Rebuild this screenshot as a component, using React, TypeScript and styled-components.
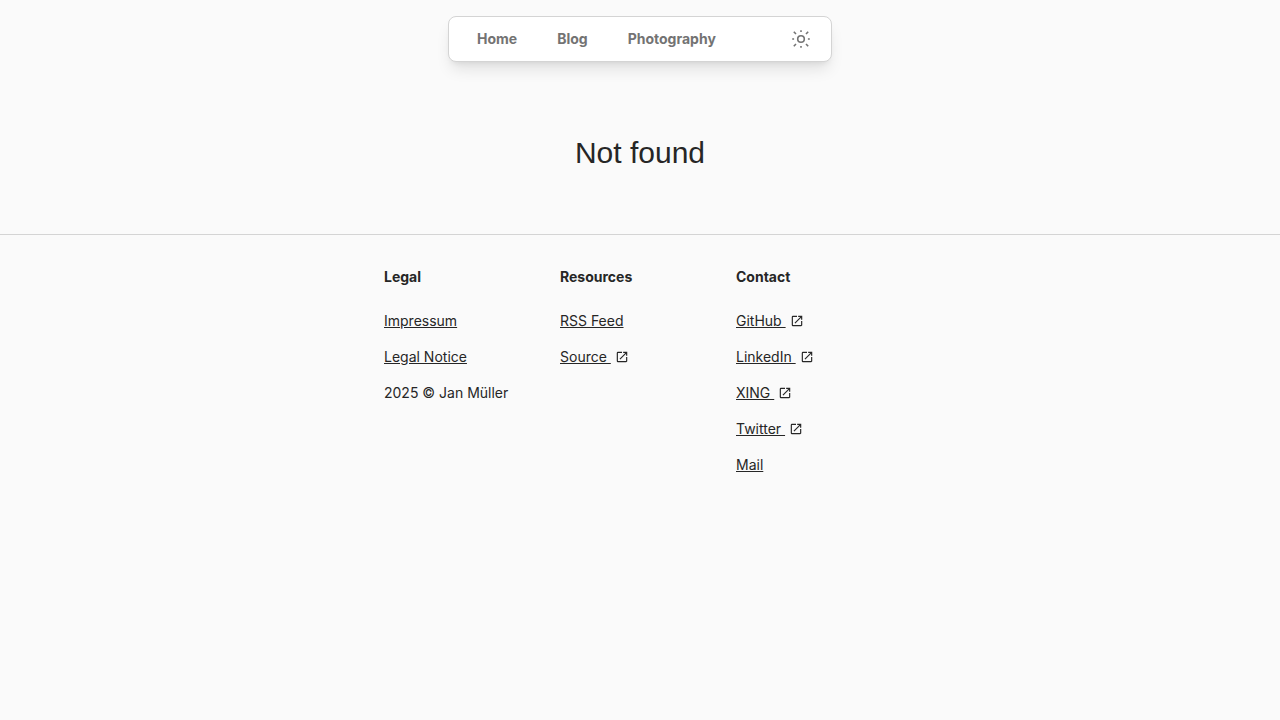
import React from "react";
import styled, { createGlobalStyle } from "styled-components";
import { MdOpenInNew } from "react-icons/md";

const GlobalStyle = createGlobalStyle`
  *, *::before, *::after { box-sizing: border-box; }
  body {
    margin: 0;
    background: #fafafa;
    color: #262626;
    font-family: Inter, "Liberation Sans", sans-serif;
    font-size: 14px;
    line-height: 20px;
    -webkit-font-smoothing: antialiased;
  }
`;

const Header = styled.header`
  display: flex;
  justify-content: center;
  padding: 16px;
`;

const NavBar = styled.nav`
  display: flex;
  align-items: center;
  justify-content: space-between;
  width: 100%;
  max-width: 384px;
  padding: 4px 12px 4px 8px;
  background: #fff;
  border: 1px solid #d4d4d4;
  border-radius: 8px;
  box-shadow: 0 10px 15px -3px rgba(0, 0, 0, 0.1), 0 4px 6px -4px rgba(0, 0, 0, 0.1);
`;

const NavLinks = styled.div`
  display: flex;
`;

const NavLink = styled.a`
  padding: 8px 20px;
  color: #737373;
  font-weight: 700;
  text-decoration: none;
`;

const ThemeButton = styled.button`
  display: flex;
  padding: 8px;
  border: 0;
  background: none;
  color: #737373;
  cursor: pointer;
`;

const Main = styled.main`
  padding: 57px 16px 63px;
`;

const Title = styled.h1`
  margin: 0;
  font-family: "Liberation Sans", Arial, sans-serif;
  font-size: 30px;
  line-height: 36px;
  font-weight: 400;
  text-align: center;
`;

const Footer = styled.footer`
  padding: 32px 16px;
  border-top: 1px solid #d4d4d4;
`;

const Columns = styled.div`
  display: grid;
  grid-template-columns: repeat(3, 1fr);
  gap: 16px;
  max-width: 512px;
  margin: 0 auto;
`;

const ColumnTitle = styled.h2`
  margin: 0 0 24px;
  font-size: 14px;
  line-height: 20px;
  font-weight: 700;
`;

const List = styled.ul`
  display: flex;
  flex-direction: column;
  gap: 16px;
  margin: 0;
  padding: 0;
  list-style: none;
`;

const Item = styled.li`
  white-space: nowrap;
`;

const FooterLink = styled.a`
  display: inline-flex;
  align-items: center;
  gap: 4px;
  color: inherit;
  text-decoration: none;
`;

const Label = styled.span`
  white-space: pre;
  text-decoration: underline;
`;

type Entry = { label: string; href?: string; external?: boolean };

const columns: { title: string; entries: Entry[] }[] = [
  {
    title: "Legal",
    entries: [
      { label: "Impressum", href: "#impressum" },
      { label: "Legal Notice", href: "#legal" },
      { label: "2025 © Jan Müller" },
    ],
  },
  {
    title: "Resources",
    entries: [
      { label: "RSS Feed", href: "#rss" },
      { label: "Source", href: "#source", external: true },
    ],
  },
  {
    title: "Contact",
    entries: [
      { label: "GitHub", href: "#github", external: true },
      { label: "LinkedIn", href: "#linkedin", external: true },
      { label: "XING", href: "#xing", external: true },
      { label: "Twitter", href: "#twitter", external: true },
      { label: "Mail", href: "#mail" },
    ],
  },
];

const SunIcon = () => (
  <svg width="20" height="20" viewBox="0 0 20 20" fill="none" stroke="currentColor" strokeWidth="1.6" aria-hidden="true">
    <circle cx="10" cy="10" r="3.3" />
    <path d="M10 1.2v1.9M10 16.9v1.9M1.2 10h1.9M16.9 10h1.9M2.8 2.8l2.2 2.2M15 15l2.2 2.2M2.8 17.2l2.2-2.2M15 5l2.2-2.2" />
  </svg>
);

export default function App() {
  return (
    <>
      <GlobalStyle />
      <Header>
        <NavBar>
          <NavLinks>
            <NavLink href="#home">Home</NavLink>
            <NavLink href="#blog">Blog</NavLink>
            <NavLink href="#photography">Photography</NavLink>
          </NavLinks>
          <ThemeButton type="button" aria-label="Toggle theme">
            <SunIcon />
          </ThemeButton>
        </NavBar>
      </Header>
      <Main>
        <Title>Not found</Title>
      </Main>
      <Footer>
        <Columns>
          {columns.map(({ title, entries }) => (
            <section key={title}>
              <ColumnTitle>{title}</ColumnTitle>
              <List>
                {entries.map(({ label, href, external }) => (
                  <Item key={label}>
                    {href ? (
                      <FooterLink href={href}>
                        <Label>{external ? label + " " : label}</Label>
                        {external && <MdOpenInNew size={14} aria-hidden="true" />}
                      </FooterLink>
                    ) : (
                      label
                    )}
                  </Item>
                ))}
              </List>
            </section>
          ))}
        </Columns>
      </Footer>
    </>
  );
}
